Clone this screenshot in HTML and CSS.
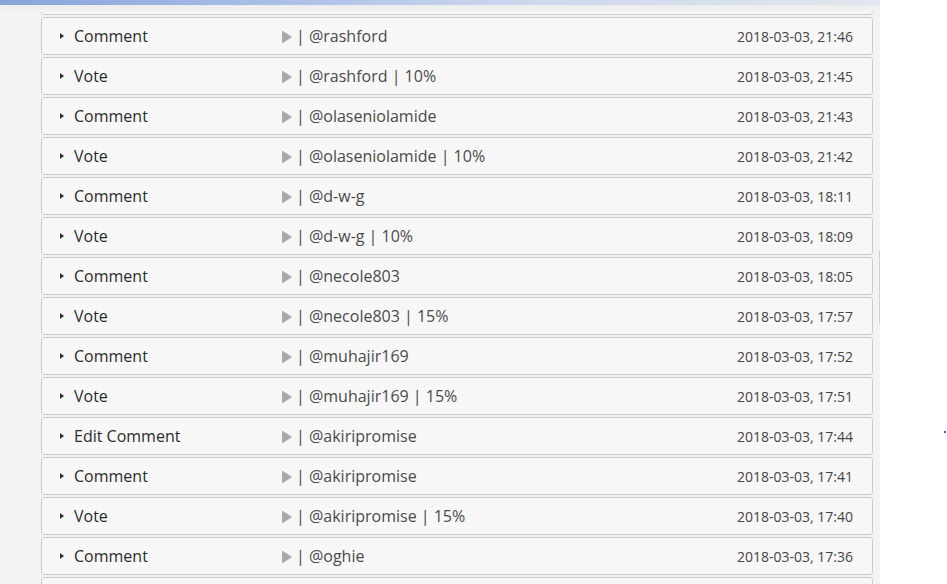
FILE: index.html
```html
<!DOCTYPE html>
<html lang="en">
  <head>
    <meta charset="UTF-8" />
    <meta name="viewport" content="width=device-width, initial-scale=1.0" />
    <title>Account History</title>
    <link rel="stylesheet" href="styles.css">
  </head>
  <body>
    <div class="panel">
      <div class="topbar"></div>
      <div class="scroll-thumb"></div>
      <div class="history" id="history">
        <!-- row scrolled out above the view, only its lower edge shows -->
        <div class="op op-edge"></div>
      </div>
    </div>
    <div class="dot"></div>

    <script>
      // Operations, newest first
      const ops = [
        { type: "Comment", who: "@rashford", time: "2018-03-03, 21:46" },
        { type: "Vote", who: "@rashford | 10%", time: "2018-03-03, 21:45" },
        { type: "Comment", who: "@olaseniolamide", time: "2018-03-03, 21:43" },
        { type: "Vote", who: "@olaseniolamide | 10%", time: "2018-03-03, 21:42" },
        { type: "Comment", who: "@d-w-g", time: "2018-03-03, 18:11" },
        { type: "Vote", who: "@d-w-g | 10%", time: "2018-03-03, 18:09" },
        { type: "Comment", who: "@necole803", time: "2018-03-03, 18:05" },
        { type: "Vote", who: "@necole803 | 15%", time: "2018-03-03, 17:57" },
        { type: "Comment", who: "@muhajir169", time: "2018-03-03, 17:52" },
        { type: "Vote", who: "@muhajir169 | 15%", time: "2018-03-03, 17:51" },
        { type: "Edit Comment", who: "@akiripromise", time: "2018-03-03, 17:44" },
        { type: "Comment", who: "@akiripromise", time: "2018-03-03, 17:41" },
        { type: "Vote", who: "@akiripromise | 15%", time: "2018-03-03, 17:40" },
        { type: "Comment", who: "@oghie", time: "2018-03-03, 17:36" }
      ];

      const history = document.getElementById("history");
      ops.forEach((op) => {
        const row = document.createElement("div");
        row.classList.add("op");
        row.innerHTML = `
          <span class="caret"></span>
          <span class="op-type">${op.type}</span>
          <svg class="play" width="11" height="14" viewBox="0 0 11 14">
            <path d="M1 1.2 Q1 0.4 1.8 0.9 L10.2 6.3 Q10.9 7 10.2 7.7 L1.8 13.1 Q1 13.6 1 12.8 Z" />
          </svg>
          <span class="op-who">| ${op.who}</span>
          <span class="op-time">${op.time}</span>
        `;
        history.appendChild(row);
      });

      // next row, only its top edge peeks in at the bottom
      const edge = document.createElement("div");
      edge.classList.add("op", "op-edge");
      history.appendChild(edge);
    </script>
  </body>
</html>
```

FILE: styles.css
```css
body {
  font-family: "Open Sans", Arial, sans-serif;
  margin: 0;
  padding: 0;
  background-color: #fff;
  overflow: hidden;
}
.panel {
  position: relative;
  width: 880px;
  height: 584px;
  overflow: hidden;
  background-color: #f3f3f3;
}
.topbar {
  position: absolute;
  top: 0;
  left: 0;
  right: 0;
  height: 12px;
  background:
    linear-gradient(to right, #86a3da 0%, #a9bee6 30%, #cdd8ee 60%, #e2e6ee 100%) top / 100% 5px no-repeat,
    linear-gradient(to bottom, #e9e9e9, #f3f3f3);
  z-index: 2;
}
.scroll-thumb {
  position: absolute;
  top: 250px;
  right: 0;
  width: 1px;
  height: 74px;
  background-color: #d2d2d2;
}
.history {
  margin-top: -23px;
  padding-left: 41px;
  width: 832px;
}
.op {
  display: flex;
  align-items: center;
  box-sizing: border-box;
  height: 38px;
  margin-bottom: 2px;
  padding: 0 19px 0 18px;
  background-color: #f7f7f7;
  border: 1px solid #cbcbcb;
  border-radius: 3px;
  font-size: 16px;
  color: #4a4a4a;
}
.caret {
  width: 0;
  height: 0;
  border-top: 3.5px solid transparent;
  border-bottom: 3.5px solid transparent;
  border-left: 4px solid #333;
  margin-right: 10px;
}
.op-type {
  width: 207px;
  color: #2b2b2b;
}
.play {
  fill: #aaa;
  margin-top: 1px;
}
.op-who {
  margin-left: 4px;
}
.op-time {
  margin-left: auto;
  font-size: 14px;
  color: #444;
}
.dot {
  position: absolute;
  top: 431px;
  left: 944px;
  width: 2px;
  height: 2px;
  background-color: #3a55e0;
}
```
